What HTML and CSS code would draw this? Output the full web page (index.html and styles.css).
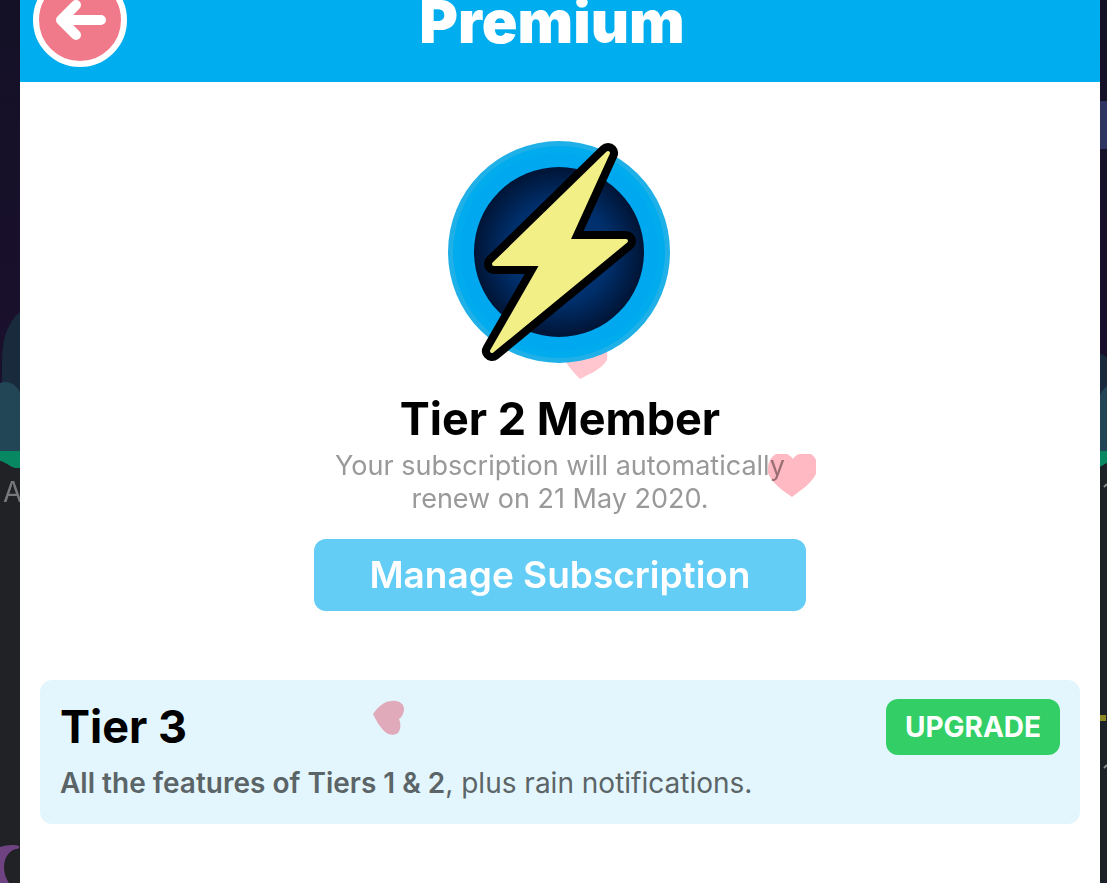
FILE: index.html
```html
<!DOCTYPE html>
<html lang="en">

<head>
	<meta charset="UTF-8">
	<meta name="viewport" content="width=device-width, initial-scale=1.0">
	<title>Premium</title>
	<link rel="stylesheet" href="styles.css">
</head>

<body>
	<div class="screen">
		<svg class="backdrop" viewBox="0 0 20 883" preserveAspectRatio="xMinYMin slice" aria-hidden="true">
			<defs>
				<linearGradient id="night" x1="0" y1="0" x2="0" y2="1">
					<stop offset="0" stop-color="#141126" />
					<stop offset="1" stop-color="#1c1030" />
				</linearGradient>
			</defs>
			<rect width="20" height="460" fill="url(#night)" />
			<path d="M20 312C8 322 2 338 2 362V452H20Z" fill="#192a3d" />
			<path d="M0 383C9 380 17 385 20 393V452H0Z" fill="#224656" />
			<path d="M0 451H20V468C12 470 8 463 0 461Z" fill="#088763" />
			<path d="M0 461C8 463 12 470 20 468V883H0Z" fill="#202226" />
			<text class="backdrop-label" x="3" y="502">A</text>
			<path d="M0 847C6 845 14 844 19 846C20 848 18 849 16 849C8 851 4 859 4 867C4 873 6 879 9 883H0Z" fill="#6f4382" />
		</svg>

		<div class="sheet">
			<header class="header">
				<button class="btn-back" aria-label="Back">
					<svg viewBox="0 0 94 94" aria-hidden="true">
						<circle cx="47" cy="47" r="44" />
						<path d="M68 47H28M43 32L28 47L43 62" />
					</svg>
				</button>
				<h1>Premium</h1>
			</header>

			<main>
				<section class="member">
					<svg class="heart heart-low" viewBox="0 0 42 30" aria-hidden="true">
						<path d="M0 12C4 18 9 24 15 30C24 25 36 21 42 11V0H0Z" />
					</svg>
					<svg class="emblem" viewBox="8 11 224 224" aria-hidden="true">
						<defs>
							<radialGradient id="core">
								<stop offset="0" stop-color="#003a80" />
								<stop offset="0.6" stop-color="#002f6b" />
								<stop offset="1" stop-color="#001435" />
							</radialGradient>
						</defs>
						<circle cx="119" cy="122" r="111" fill="#1fb0e8" />
						<circle cx="119" cy="122" r="106" fill="#00abee" />
						<circle cx="119" cy="122" r="99" fill="#00a8f0" />
						<circle cx="119" cy="122" r="85" fill="url(#core)" />
						<path class="bolt-edge" d="M168 23L128 111H186L52 221L102 134H54Z" />
						<path class="bolt" d="M168 23L128 111H186L52 221L102 134H54Z" />
					</svg>
					<h2>Tier 2 Member</h2>
					<p class="renewal">Your subscription will automatically renew on 21 May 2020.</p>
					<svg class="heart heart-side" viewBox="0 0 48 44" aria-hidden="true">
						<path d="M8 0H19C22 2 24 3 25 5C26 3 28 1 31 0H43C46 2 47 4 48 6V20C43 30 33 36 24 43C15 37 3 28 0 19C-1 11 2 3 8 0Z" />
					</svg>
					<button class="btn-manage">Manage Subscription</button>
				</section>

				<section class="tier">
					<div class="tier-top">
						<h2>Tier 3</h2>
						<button class="btn-upgrade">UPGRADE</button>
					</div>
					<p><strong>All the features of Tiers 1 &amp; 2</strong>, plus rain notifications.</p>
					<svg class="heart heart-card" viewBox="0 0 32 36" aria-hidden="true">
						<path d="M0 14C5 7 11 1 19 1C26 0 31 4 31 9C31 13 29 17 26 19C28 24 28 29 25 33C20 36 15 35 11 31C6 26 3 20 0 14Z" />
					</svg>
				</section>
			</main>
		</div>

		<svg class="backdrop" viewBox="0 0 7 883" preserveAspectRatio="xMinYMin slice" aria-hidden="true">
			<rect width="7" height="460" fill="url(#night)" />
			<rect y="101" width="7" height="48" fill="#2d3560" />
			<path d="M0 354C3 354 5 356 7 358V452H0Z" fill="#192a3d" />
			<path d="M0 395C2 391 4 388 7 386V452H0Z" fill="#224656" />
			<path d="M0 451H7V463L0 467Z" fill="#088763" />
			<path d="M0 467L7 463V883H0Z" fill="#1b2126" />
			<rect y="715" width="6" height="6" fill="#8c8523" />
			<path d="M4 487L7 484M4 768L7 765" stroke="#85888a" stroke-width="2" />
		</svg>
	</div>
</body>

</html>
```
FILE: styles.css
```css
* {
	margin: 0;
	padding: 0;
	box-sizing: border-box;
}

body {
	font-family: Inter, "Liberation Sans", sans-serif;
	color: #000;
	background-color: #202226;
}

button {
	border: none;
	font-family: inherit;
	color: #fff;
	cursor: pointer;
}

.screen {
	display: grid;
	grid-template-columns: 20px 1fr 7px;
	min-height: 100vh;
}

.backdrop {
	display: block;
	width: 100%;
}

.backdrop-label {
	font-size: 28px;
	fill: #77787b;
}

.sheet {
	background-color: #fff;
}

/* header */

.header {
	display: grid;
	grid-template-columns: 94px 1fr 110px;
	align-content: end;
	align-items: end;
	height: 82px;
	padding: 0 13px 15px;
	overflow: hidden;
	background-color: #00aeef;
}

.header h1 {
	font-size: 59px;
	font-weight: 900;
	line-height: 90px;
	text-align: center;
	color: #fff;
}

.btn-back {
	width: 94px;
	height: 94px;
	border-radius: 50%;
	background: none;
}

.btn-back svg {
	display: block;
	fill: #f07a8a;
	stroke: #fff;
	stroke-width: 6px;
}

.btn-back path {
	fill: none;
	stroke-width: 10px;
	stroke-linecap: round;
	stroke-linejoin: round;
}

/* current membership */

.member {
	position: relative;
	display: flex;
	flex-direction: column;
	align-items: center;
	padding: 59px 20px 69px;
}

.member h2,
.tier h2 {
	font-size: 45px;
	font-weight: 700;
	line-height: 56px;
}

.member h2 {
	margin-top: 26px;
}

.emblem {
	position: relative;
	width: 224px;
	height: 224px;
}

.bolt-edge {
	stroke: #000;
	stroke-width: 20px;
	stroke-linejoin: round;
}

.bolt {
	fill: #f2ef87;
	stroke: #f2ef87;
	stroke-width: 4px;
	stroke-linejoin: round;
}

.renewal {
	max-width: 492px;
	margin-top: 2px;
	font-size: 27px;
	line-height: 33px;
	text-align: center;
	color: #999;
}

.btn-manage {
	width: 492px;
	max-width: 100%;
	height: 72px;
	margin-top: 24px;
	padding-bottom: 2px;
	border-radius: 12px;
	font-size: 37px;
	font-weight: 600;
	background-color: #63cdf5;
}

/* next tier card */

.tier {
	position: relative;
	margin: 0 20px;
	padding: 19px 20px 24px;
	border-radius: 12px;
	background-color: #e4f6fd;
}

.tier-top {
	display: flex;
	justify-content: space-between;
	align-items: center;
}

.tier p {
	margin-top: 12px;
	font-size: 28px;
	line-height: 33px;
	color: #5b6568;
}

.tier strong {
	font-weight: 600;
}

.btn-upgrade {
	width: 174px;
	height: 56px;
	border-radius: 12px;
	font-size: 28px;
	font-weight: 700;
	background-color: #33cf66;
}

/* hearts drifting over the sheet */

.heart {
	position: absolute;
	mix-blend-mode: multiply;
	pointer-events: none;
}

.heart-low {
	top: 267px;
	left: calc(50% + 5px);
	width: 42px;
	fill: #ffc6cf;
}

.heart-side {
	top: 372px;
	left: calc(50% + 208px);
	width: 48px;
	fill: #ffb9c2;
}

.heart-card {
	top: 20px;
	left: 32%;
	width: 32px;
	fill: #fbb0bc;
}
```
